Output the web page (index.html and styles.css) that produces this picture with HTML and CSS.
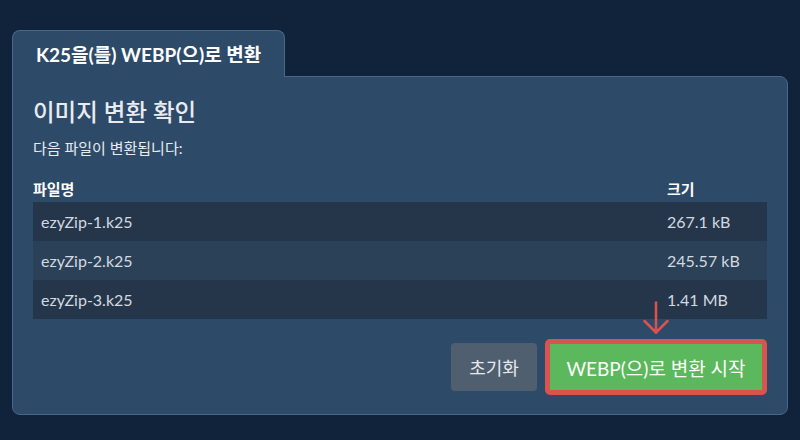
FILE: index.html
```html
<!DOCTYPE html>
<html lang="ko">
<head>
<meta charset="utf-8">
<title>K25을(를) WEBP(으)로 변환</title>
<link rel="stylesheet" href="styles.css">
</head>
<body>
<div class="wrap">
  <div class="tab">K25을(를) WEBP(으)로 변환</div>
  <div class="panel">
    <h2 class="title">이미지 변환 확인</h2>
    <p class="subtitle">다음 파일이 변환됩니다:</p>
    <table class="files">
      <thead>
        <tr><th>파일명</th><th class="size">크기</th></tr>
      </thead>
      <tbody>
        <tr><td>ezyZip-1.k25</td><td class="size">267.1 kB</td></tr>
        <tr><td>ezyZip-2.k25</td><td class="size">245.57 kB</td></tr>
        <tr><td>ezyZip-3.k25</td><td class="size">1.41 MB</td></tr>
      </tbody>
    </table>
    <div class="actions">
      <button class="btn btn-reset">초기화</button>
      <div class="start-wrap">
        <svg class="arrow" width="28" height="34" viewBox="0 0 28 34" aria-hidden="true">
          <line x1="14" y1="1.5" x2="14" y2="31.5" />
          <polyline points="2.5,20 14,31.5 25.5,20" />
        </svg>
        <button class="btn btn-start">WEBP(으)로 변환 시작</button>
      </div>
    </div>
  </div>
</div>
</body>
</html>
```

FILE: styles.css
```css
html, body {
  margin: 0;
  padding: 0;
  background: #11233a;
}
body {
  font-family: Lato, "Noto Sans CJK KR", sans-serif;
  color: #ffffff;
  width: 800px;
  height: 440px;
  overflow: hidden;
}
.wrap {
  padding: 30px 12px 0 12px;
}
.tab {
  position: relative;
  z-index: 2;
  display: inline-block;
  box-sizing: border-box;
  height: 47px;
  margin-bottom: -1px;
  padding: 0 23px;
  line-height: 47px;
  background: #2d4a69;
  border: 1px solid #4b6788;
  border-bottom: none;
  border-radius: 8px 8px 0 0;
  font-size: 19px;
  font-weight: 700;
  color: #ffffff;
}
.panel {
  position: relative;
  z-index: 1;
  background: #2d4a69;
  border: 1px solid #4b6788;
  border-radius: 0 8px 8px 8px;
  padding: 20px 20px 19px 20px;
}
.title {
  margin: 0 0 11px 0;
  font-size: 23.5px;
  line-height: 30px;
  font-weight: 500;
  color: #e8ecf0;
}
.subtitle {
  margin: 0;
  font-size: 15px;
  line-height: 20px;
  color: #e8ecf0;
}
.files {
  width: 100%;
  border-collapse: collapse;
  margin-top: 21px;
}
.files th {
  text-align: left;
  padding: 0 8px 3px 0;
  font-size: 15px;
  line-height: 20px;
  font-weight: 700;
  color: #ffffff;
}
.files th.size {
  padding-left: 8px;
}
.files td {
  height: 39px;
  padding: 0 8px;
  font-size: 16px;
  color: #d3d9e0;
}
.files tbody tr:nth-child(odd) {
  background: #25364b;
}
.files tbody tr:nth-child(even) {
  background: #2b4157;
}
.files .size {
  width: 92px;
}
.actions {
  display: flex;
  justify-content: flex-end;
  align-items: center;
  gap: 8px;
  margin-top: 20px;
}
.btn {
  font-family: Lato, "Noto Sans CJK KR", sans-serif;
  color: #ffffff;
  border: none;
  cursor: pointer;
}
.btn-reset {
  height: 48px;
  width: 86px;
  border-radius: 4px;
  background: #4f5f70;
  font-size: 18px;
  color: #e6e9ec;
}
.start-wrap {
  position: relative;
}
.btn-start {
  display: block;
  box-sizing: border-box;
  height: 56px;
  width: 222px;
  border: 5px solid #d9534f;
  border-radius: 5px;
  background: #5cb85c;
  font-size: 19px;
}
.arrow {
  position: absolute;
  left: 50%;
  bottom: 100%;
  margin-left: -14px;
  margin-bottom: 4px;
  fill: none;
  stroke: #d9534f;
  stroke-width: 2.5;
  stroke-linecap: round;
  stroke-linejoin: round;
}
```
